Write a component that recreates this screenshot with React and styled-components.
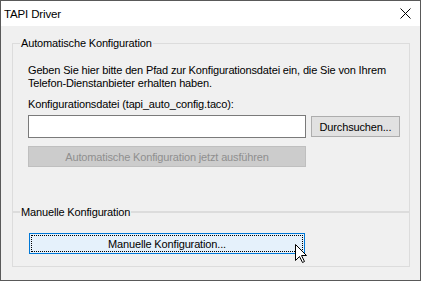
import React from 'react';
import styled, { createGlobalStyle } from 'styled-components';

const GlobalStyle = createGlobalStyle`
  html, body {
    margin: 0;
    padding: 0;
    background: #ffffff;
  }
  body {
    font-family: "Liberation Sans", Arial, sans-serif;
    font-size: 11px;
    letter-spacing: -0.15px;
    color: #000;
  }
`;

const Window = styled.div`
  width: 421px;
  height: 281px;
  box-sizing: border-box;
  border: 1px solid #595959;
  display: flex;
  flex-direction: column;
  background: #f0f0f0;
`;

const TitleBar = styled.div`
  height: 25px;
  flex: none;
  background: #ffffff;
  display: flex;
  align-items: center;
  justify-content: space-between;
  padding: 0 9px 0 3px;
`;

const Title = styled.span`
  font-size: 11.5px;
  line-height: 14px;
`;

const Body = styled.div`
  flex: 1;
  padding: 17px 10px 0 11px;
`;

const GroupBox = styled.div`
  border: 1px solid #dcdcdc;
  padding: 0 15px ${(p) => p.$bottom}px 15px;
`;

const Caption = styled.div`
  display: table;
  margin: -8px 0 0 -8px;
  padding: 0 1px;
  line-height: 14px;
  background: #f0f0f0;
`;

const Text = styled.p`
  margin: 14px 0 0 0;
  line-height: 13px;
  white-space: nowrap;
`;

const Label = styled.div`
  margin-top: 8px;
  line-height: 13px;
  white-space: nowrap;
`;

const FileRow = styled.div`
  margin-top: 4px;
  display: flex;
  align-items: center;
  gap: 5px;

  & > * {
    flex: none;
  }
`;

const Input = styled.input`
  width: 278px;
  height: 23px;
  box-sizing: border-box;
  border: 1px solid #7a7a7a;
  background: #ffffff;
  margin: 0;
  padding: 0 3px;
  font: inherit;
  outline: none;
`;

const Button = styled.button`
  height: 21px;
  box-sizing: border-box;
  margin: 0;
  padding: 0;
  font-family: inherit;
  font-size: 11px;
  letter-spacing: -0.15px;
  color: #000;
  background: #e1e1e1;
  border: 1px solid #adadad;
  width: ${(p) => p.$width}px;

  &:disabled {
    background: #cccccc;
    border-color: #bfbfbf;
    color: #8f8f8f;
  }
`;

const ActionButton = styled(Button)`
  display: block;
  margin-top: ${(p) => p.$top}px;
`;

const FocusButton = styled(Button)`
  display: block;
  background: #e5f1fb;
  border-color: #0078d7;
  outline: 1px dotted #000;
  outline-offset: -3px;
`;

const ButtonSlot = styled.div`
  position: relative;
  margin-top: 14px;
  margin-left: 1px;
  width: 276px;
`;

const Pointer = styled.svg`
  position: absolute;
  left: 266px;
  top: 11px;
  pointer-events: none;
`;

function CloseIcon() {
  return (
    <svg width="11" height="11" viewBox="0 0 11 11">
      <path d="M0.5 0.5 L10.5 10.5 M10.5 0.5 L0.5 10.5" stroke="#000" strokeWidth="1" fill="none" />
    </svg>
  );
}

export default function App() {
  return (
    <>
      <GlobalStyle />
      <Window>
        <TitleBar>
          <Title>TAPI Driver</Title>
          <CloseIcon />
        </TitleBar>
        <Body>
          <GroupBox $bottom={44}>
            <Caption>Automatische Konfiguration</Caption>
            <Text>
              Geben Sie hier bitte den Pfad zur Konfigurationsdatei ein, die Sie von Ihrem
              <br />
              Telefon-Dienstanbieter erhalten haben.
            </Text>
            <Label>Konfigurationsdatei (tapi_auto_config.taco):</Label>
            <FileRow>
              <Input type="text" />
              <Button $width={89}>Durchsuchen...</Button>
            </FileRow>
            <ActionButton $width={278} $top={8} disabled>
              Automatische Konfiguration jetzt ausführen
            </ActionButton>
          </GroupBox>
          <GroupBox $bottom={12}>
            <Caption>Manuelle Konfiguration</Caption>
            <ButtonSlot>
              <FocusButton $width={276}>Manuelle Konfiguration...</FocusButton>
              <Pointer width="13" height="20" viewBox="0 0 13 20">
                <path
                  d="M0.5 0.5 L0.5 16.5 L4.5 12.5 L7.5 18.5 L9.5 17.5 L6.5 11.5 L11.5 11.5 Z"
                  fill="#fff"
                  stroke="#000"
                  strokeWidth="1"
                  strokeLinejoin="miter"
                />
              </Pointer>
            </ButtonSlot>
          </GroupBox>
        </Body>
      </Window>
    </>
  );
}
